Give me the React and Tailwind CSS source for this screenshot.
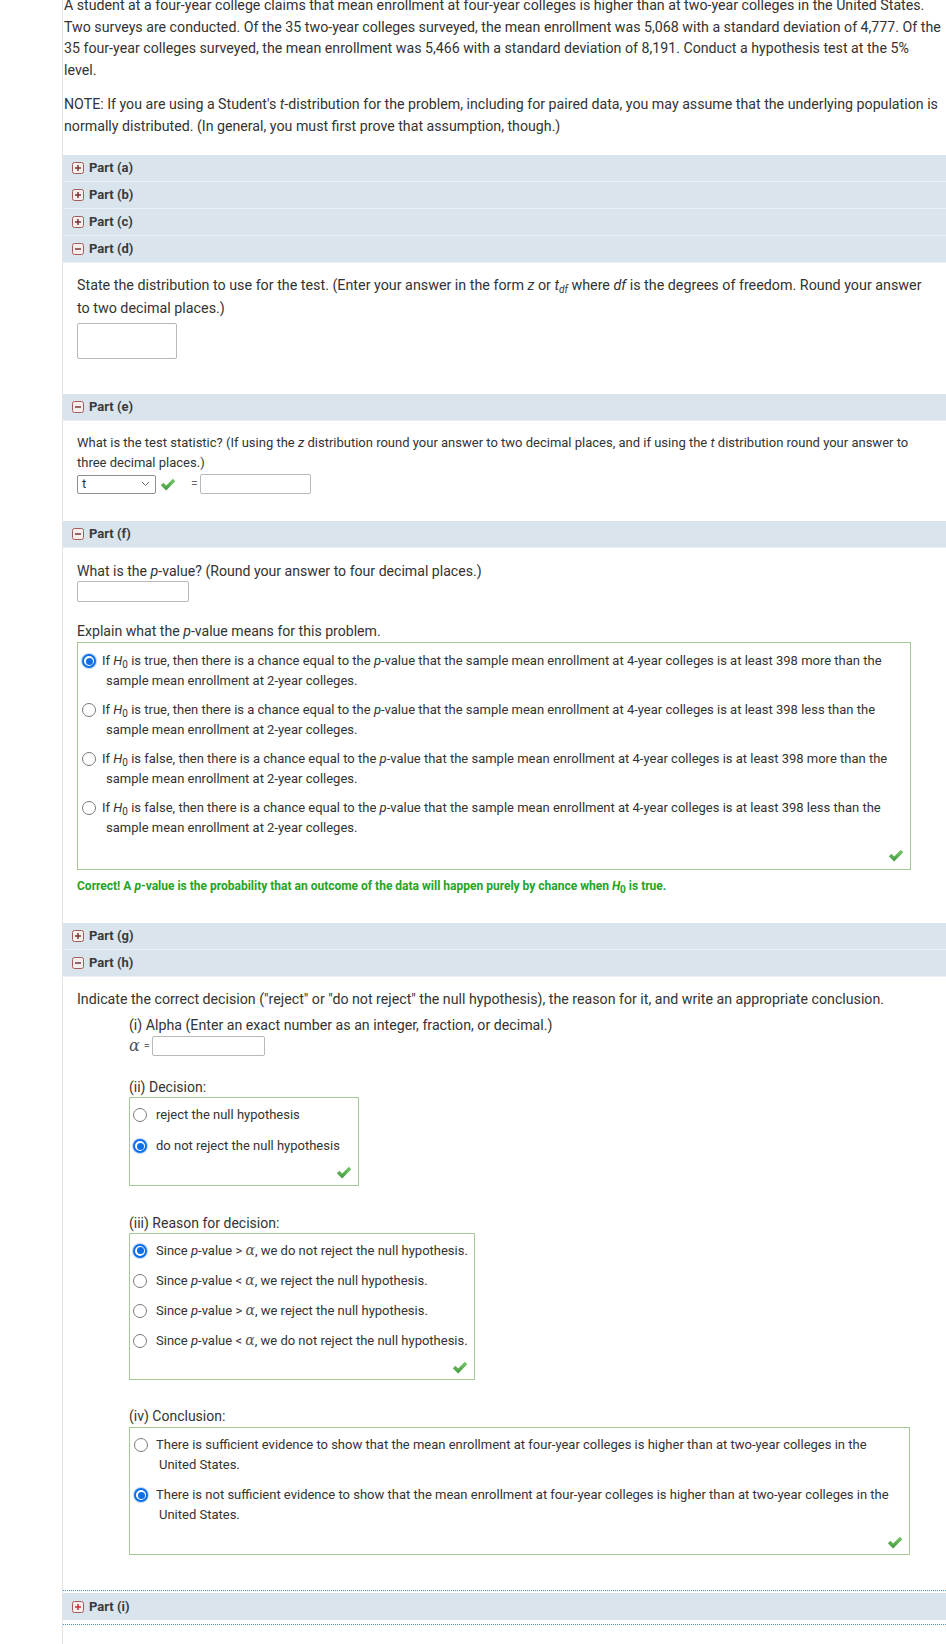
import React from 'react';

function Toggle({ open, red }) {
  return (
    <svg width="12" height="12" viewBox="0 0 12 12" className="shrink-0">
      <rect x="0.5" y="0.5" width="11" height="11" rx="2" fill="#f6eded" stroke="#a65b5b" />
      <path d="M3 6h6" stroke={red ? '#c0262d' : '#6e2b2b'} strokeWidth="1.4" />
      {!open && <path d="M6 3v6" stroke={red ? '#c0262d' : '#6e2b2b'} strokeWidth="1.4" />}
    </svg>
  );
}

function PartBar({ label, open, red }) {
  return (
    <div className="h-[27px] bg-[#d9e4ed] border-b border-[#e9eff4] flex items-center pl-[9px] gap-[5px] text-[13px] font-bold text-[#3a3a3a]">
      <Toggle open={open} red={red} />
      <span>Part ({label})</span>
    </div>
  );
}

function Check() {
  return (
    <svg width="16" height="13" viewBox="0 0 16 13">
      <defs>
        <linearGradient id="ck" x1="0" y1="0" x2="0" y2="1">
          <stop offset="0" stopColor="#7cc86e" />
          <stop offset="1" stopColor="#3f9a3c" />
        </linearGradient>
      </defs>
      <path d="M0.8 7.2 L3.4 4.8 L6.2 7.6 L12.8 0.8 L15.3 3.2 L6.2 12.4 Z" fill="url(#ck)" />
    </svg>
  );
}

function Radio({ checked }) {
  if (checked) {
    return (
      <span className="w-[14px] h-[14px] shrink-0 rounded-full border-2 border-[#0d6fe6] bg-white flex items-center justify-center shadow-[0_0_0_1px_#bcd6f7]">
        <span className="block w-[7px] h-[7px] rounded-full bg-[#0d6fe6]" />
      </span>
    );
  }
  return <span className="block w-[14px] h-[14px] shrink-0 rounded-full border border-[#7a7a7a] bg-white" />;
}

function H0() {
  return (
    <>
      <i>H</i>
      <sub className="text-[10px]">0</sub>
    </>
  );
}

function Alpha({ big }) {
  return (
    <i className={big ? "font-['DejaVu_Serif',serif] text-[16px] text-[#555]" : "font-['DejaVu_Serif',serif] text-[14px] text-[#555]"}>
      α
    </i>
  );
}

const pOptions = [
  { checked: true, cond: 'true', dir: 'more' },
  { checked: false, cond: 'true', dir: 'less' },
  { checked: false, cond: 'false', dir: 'more' },
  { checked: false, cond: 'false', dir: 'less' },
];

const reasons = [
  { checked: true, op: '>', text: 'we do not reject the null hypothesis.' },
  { checked: false, op: '<', text: 'we reject the null hypothesis.' },
  { checked: false, op: '>', text: 'we reject the null hypothesis.' },
  { checked: false, op: '<', text: 'we do not reject the null hypothesis.' },
];

export default function App() {
  return (
    <div className="min-h-screen bg-white font-['Roboto',sans-serif] text-[#333]">
      <div className="ml-[62px] border-l border-[#e4e4e4] min-h-[1650px]">
        <p className="-mt-[5px] pl-px text-[14.2px] leading-[21.5px]">
          A student at a four-year college claims that mean enrollment at four-year colleges is higher than at two-year colleges in the United States.
          <br />
          Two surveys are conducted. Of the 35 two-year colleges surveyed, the mean enrollment was 5,068 with a standard deviation of 4,777. Of the
          <br />
          35 four-year colleges surveyed, the mean enrollment was 5,466 with a standard deviation of 8,191. Conduct a hypothesis test at the 5%
          <br />
          level.
        </p>
        <p className="mt-[13px] pl-px text-[14.2px] leading-[21.5px]">
          NOTE: If you are using a Student's <i>t</i>-distribution for the problem, including for paired data, you may assume that the underlying population is
          <br />
          normally distributed. (In general, you must first prove that assumption, though.)
        </p>

        <div className="mt-[18px]">
          <PartBar label="a" />
          <PartBar label="b" />
          <PartBar label="c" />
          <PartBar label="d" open />
        </div>

        {/* Part (d) */}
        <div className="pl-[14px] pr-[16px] pt-[11px] pb-[35px]">
          <p className="text-[14.3px] leading-[23px]">
            State the distribution to use for the test. (Enter your answer in the form <i>z</i> or <i>t</i>
            <sub className="text-[10px]"><i>df</i></sub> where <i>df</i> is the degrees of freedom. Round your answer to two decimal places.)
          </p>
          <div className="mt-[3px] w-[100px] h-[36px] border border-[#b8b8b8] rounded-[2px]" />
        </div>

        <PartBar label="e" open />
        {/* Part (e) */}
        <div className="pl-[14px] pr-[8px] pt-[12px] pb-[27px]">
          <p className="text-[13px] leading-[20px]">
            What is the test statistic? (If using the <i>z</i> distribution round your answer to two decimal places, and if using the <i>t</i> distribution round your answer to three decimal places.)
          </p>
          <div className="mt-px flex items-center h-[20px]">
            <div className="w-[79px] h-[19px] border border-[#8f8f8f] rounded-[2px] flex items-center justify-between pl-[4px] pr-[5px] text-[13px]">
              <span>t</span>
              <svg width="9" height="6" viewBox="0 0 9 6">
                <path d="M1 1l3.5 3.5L8 1" fill="none" stroke="#666" strokeWidth="1" />
              </svg>
            </div>
            <span className="ml-[4px]">
              <Check />
            </span>
            <span className="ml-[15px] text-[12px] text-[#666]">=</span>
            <div className="ml-[2px] w-[111px] h-[20px] border border-[#b8b8b8] rounded-[2px]" />
          </div>
        </div>

        <PartBar label="f" open />
        {/* Part (f) */}
        <div className="pl-[14px] pr-[8px] pt-[13px] pb-[29px]">
          <p className="text-[14.1px] leading-[20px]">
            What is the <i>p</i>-value? (Round your answer to four decimal places.)
          </p>
          <div className="w-[112px] h-[21px] border border-[#b8b8b8] rounded-[2px]" />
          <p className="mt-[19px] text-[14.1px] leading-[20px]">
            Explain what the <i>p</i>-value means for this problem.
          </p>
          <div className="mt-px w-[834px] border border-[#a4c994] pt-[8px] pb-[7px]">
            <div className="flex flex-col gap-[9px]">
              {pOptions.map((o, i) => (
                <div key={i} className="flex items-start pl-[4px] text-[13px] leading-[20px]">
                  <span className="mt-[3px]">
                    <Radio checked={o.checked} />
                  </span>
                  <p className="pl-[10px] pr-[20px] -indent-[4px]">
                    If <H0 /> is {o.cond}, then there is a chance equal to the <i>p</i>-value that the sample mean enrollment at 4-year colleges is at least 398 {o.dir} than the sample mean enrollment at 2-year colleges.
                  </p>
                </div>
              ))}
            </div>
            <div className="flex justify-end pr-[6px] mt-[11px]">
              <Check />
            </div>
          </div>
          <p className="mt-[8px] text-[12px] leading-[16px] font-bold text-[#25a325]">
            Correct! A <i>p</i>-value is the probability that an outcome of the data will happen purely by chance when <H0 /> is true.
          </p>
        </div>

        <PartBar label="g" />
        <PartBar label="h" open />
        {/* Part (h) */}
        <div className="pl-[14px] pr-[8px] pt-[12px]">
          <p className="text-[14.2px] leading-[20px]">
            Indicate the correct decision ("reject" or "do not reject" the null hypothesis), the reason for it, and write an appropriate conclusion.
          </p>
          <div className="pl-[52px]">
            <p className="mt-[6px] text-[14.2px] leading-[20px]">(i) Alpha (Enter an exact number as an integer, fraction, or decimal.)</p>
            <div className="mt-px flex items-center h-[20px]">
              <Alpha big />
              <span className="ml-[4px] text-[11px] text-[#666]">=</span>
              <div className="ml-[2px] w-[113px] h-[20px] border border-[#b8b8b8] rounded-[2px]" />
            </div>

            <p className="mt-[21px] text-[14px] leading-[20px]">(ii) Decision:</p>
            <div className="w-[230px] border border-[#a4c994] pt-[7px] pb-[6px]">
              <div className="flex flex-col gap-[11px]">
                <div className="flex items-center gap-[9px] pl-[3px] text-[13px] leading-[20px]">
                  <Radio />
                  <span>reject the null hypothesis</span>
                </div>
                <div className="flex items-center gap-[9px] pl-[3px] text-[13px] leading-[20px]">
                  <Radio checked />
                  <span>do not reject the null hypothesis</span>
                </div>
              </div>
              <div className="flex justify-end pr-[6px] mt-[10px]">
                <Check />
              </div>
            </div>

            <p className="mt-[27px] text-[14px] leading-[20px]">(iii) Reason for decision:</p>
            <div className="w-[346px] border border-[#a4c994] pt-[6px] pb-[5px]">
              <div className="flex flex-col gap-[9px]">
                {reasons.map((r, i) => (
                  <div key={i} className="flex items-center gap-[9px] pl-[3px] text-[13px] leading-[20px]">
                    <Radio checked={r.checked} />
                    <span>
                      Since <i>p</i>-value {r.op} <Alpha />, {r.text}
                    </span>
                  </div>
                ))}
              </div>
              <div className="flex justify-end pr-[6px] mt-[10px]">
                <Check />
              </div>
            </div>

            <p className="mt-[26px] text-[14px] leading-[20px]">(iv) Conclusion:</p>
            <div className="mt-px w-[781px] border border-[#a4c994] pt-[7px] pb-[5px]">
              <div className="flex flex-col gap-[10px]">
                <div className="flex items-start pl-[4px] text-[13px] leading-[20px]">
                  <span className="mt-[3px]">
                    <Radio />
                  </span>
                  <p className="pl-[11px] pr-[12px] -indent-[3px]">
                    There is sufficient evidence to show that the mean enrollment at four-year colleges is higher than at two-year colleges in the United States.
                  </p>
                </div>
                <div className="flex items-start pl-[4px] text-[13px] leading-[20px]">
                  <span className="mt-[3px]">
                    <Radio checked />
                  </span>
                  <p className="pl-[11px] pr-[12px] -indent-[3px]">
                    There is not sufficient evidence to show that the mean enrollment at four-year colleges is higher than at two-year colleges in the United States.
                  </p>
                </div>
              </div>
              <div className="flex justify-end pr-[6px] mt-[11px]">
                <Check />
              </div>
            </div>
          </div>
        </div>

        <div className="mt-[35px] border-y border-dotted border-[#4b8ec2] pt-[2px] pb-[4px]">
          <div className="h-[27px] bg-[#d9e4ed] flex items-center pl-[9px] gap-[5px] text-[13px] font-bold text-[#3a3a3a]">
            <Toggle red />
            <span>Part (i)</span>
          </div>
        </div>
      </div>
    </div>
  );
}
